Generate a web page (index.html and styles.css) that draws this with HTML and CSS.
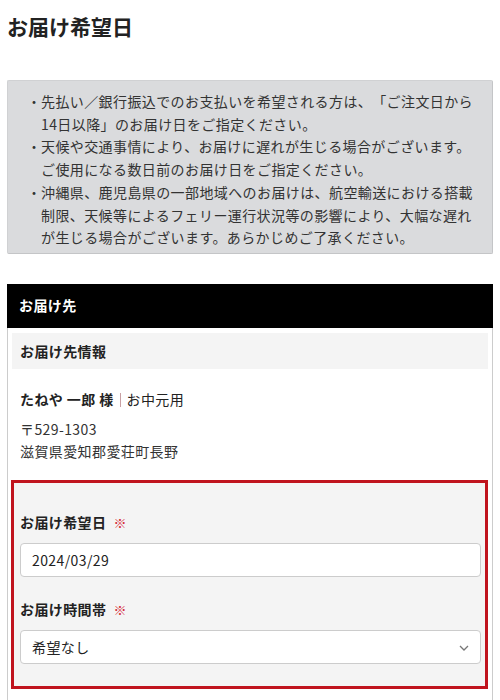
FILE: index.html
```html
<!DOCTYPE html>
<html lang="ja">
<head>
    <meta charset="UTF-8">
    <title>お届け希望日</title>
    <link rel="stylesheet" href="styles.css">
</head>
<body>
    <div class="page">
        <h2 class="page-title">お届け希望日</h2>
        <div class="notice-box">
            <ul>
                <li>先払い／銀行振込でのお支払いを希望される方は、「ご注文日から14日以降」のお届け日をご指定ください。</li>
                <li>天候や交通事情により、お届けに遅れが生じる場合がございます。ご使用になる数日前のお届け日をご指定ください。</li>
                <li>沖縄県、鹿児島県の一部地域へのお届けは、航空輸送における搭載制限、天候等によるフェリー運行状況等の影響により、大幅な遅れが生じる場合がございます。あらかじめご了承ください。</li>
            </ul>
        </div>
        <div class="delivery-card">
            <div class="card-header">お届け先</div>
            <div class="card-body">
                <div class="info-title">お届け先情報</div>
                <div class="address-block">
                    <p class="recipient"><strong>たねや 一郎 様</strong><span class="sep"></span><span class="purpose">お中元用</span></p>
                    <p>〒529-1303</p>
                    <p>滋賀県愛知郡愛荘町長野</p>
                </div>
                <div class="date-box">
                    <label class="field-label" for="deliveryDate">お届け希望日<span class="required">※</span></label>
                    <input type="text" id="deliveryDate" class="field-input" value="2024/03/29">
                    <label class="field-label second" for="deliveryTime">お届け時間帯<span class="required">※</span></label>
                    <div class="select-wrap">
                        <select id="deliveryTime" class="field-input">
                            <option>希望なし</option>
                        </select>
                        <svg class="chevron" width="10" height="6" viewBox="0 0 10 6"><path d="M1 1l4 4 4-4" fill="none" stroke="#777" stroke-width="1.3"/></svg>
                    </div>
                </div>
            </div>
        </div>
    </div>
</body>
</html>
```

FILE: styles.css
```css
body {
    margin: 0;
    font-family: "Noto Sans CJK JP", "Noto Sans", sans-serif;
    font-size: 14px;
    letter-spacing: 0.4px;
    text-spacing-trim: space-all;
    color: #333;
    background: #fff;
}
.page {
    padding: 0 7px;
}
.page-title {
    margin: 0;
    padding-top: 10px;
    font-size: 21px;
    line-height: 32px;
    font-weight: bold;
    letter-spacing: 0;
    color: #222;
}
.notice-box {
    margin-top: 38px;
    padding: 9px 10px 4px 19px;
    background-color: #dadbdd;
    border: 1px solid #d0d1d3;
    border-right-color: #c4c5c7;
    border-bottom-color: #c4c5c7;
    border-radius: 2px;
}
.notice-box ul {
    margin: 0;
    padding: 0 0 0 14px;
    list-style: none;
    line-height: 22.7px;
}
.notice-box li::before {
    content: "・";
    display: inline-block;
    width: 14px;
    margin-left: -14px;
    letter-spacing: 0;
}
.delivery-card {
    margin-top: 30px;
}
.card-header {
    background-color: #000;
    color: #fff;
    font-weight: bold;
    height: 44px;
    line-height: 43px;
    padding-left: 12px;
}
.card-body {
    border: 1px solid #ccc;
    border-top: none;
    padding: 5px 4px 20px 3px;
}
.info-title {
    margin-left: 1px;
    background-color: #f4f4f4;
    height: 36px;
    line-height: 36px;
    padding-left: 8px;
    font-weight: bold;
    color: #222;
}
.address-block {
    padding: 19px 0 18px 9px;
}
.address-block p {
    margin: 0;
    line-height: 22px;
}
.address-block .recipient {
    margin-bottom: 8px;
    color: #222;
}
.sep {
    display: inline-block;
    width: 1px;
    height: 14px;
    background-color: #c9a0a4;
    margin: 0 6px;
    vertical-align: -2px;
}
.date-box {
    border: 3px solid #c0141e;
    background-color: #f4f4f4;
    padding: 28px 4px 22px 6px;
}
.field-label {
    display: block;
    line-height: 22px;
    margin-bottom: 9px;
    font-weight: bold;
    color: #222;
}
.field-label.second {
    margin-top: 21px;
}
.required {
    color: #d62c38;
    font-size: 13px;
    margin-left: 7px;
    font-weight: bold;
}
.field-input {
    display: block;
    width: 100%;
    box-sizing: border-box;
    height: 34px;
    padding: 0 11px;
    border: 1px solid #ccc;
    border-radius: 4px;
    background-color: #fff;
    font-family: inherit;
    font-size: 14px;
    letter-spacing: 0.4px;
    color: #222;
    -webkit-appearance: none;
    appearance: none;
}
.select-wrap {
    position: relative;
}
.chevron {
    position: absolute;
    right: 12px;
    top: 15px;
}
```
